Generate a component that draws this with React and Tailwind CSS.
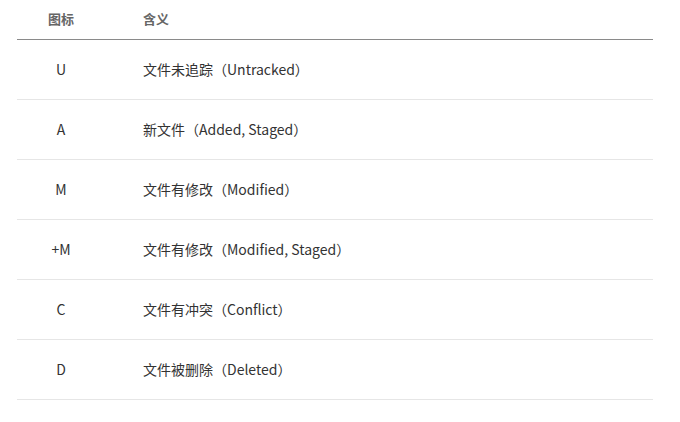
const rows = [
  { icon: "U", desc: "文件未追踪（Untracked）" },
  { icon: "A", desc: "新文件（Added, Staged）" },
  { icon: "M", desc: "文件有修改（Modified）" },
  { icon: "+M", desc: "文件有修改（Modified, Staged）" },
  { icon: "C", desc: "文件有冲突（Conflict）" },
  { icon: "D", desc: "文件被删除（Deleted）" },
];

const App = () => {
  return (
    <div className="bg-white w-[680px] h-[422px] pl-[17px] font-['Noto_Sans_CJK_SC',sans-serif] text-[14px] text-[#333]">
      <table className="w-[636px] border-collapse">
        <thead>
          <tr className="h-[39px] border-b border-[#8a8a8a]">
            <th className="w-[88px] text-center font-bold text-[13px] text-[#666] pb-[2px]">图标</th>
            <th className="text-left font-bold text-[13px] text-[#666] pl-[38px] pb-[2px]">含义</th>
          </tr>
        </thead>
        <tbody>
          {rows.map((row) => (
            <tr key={row.icon} className="h-[60px] border-b border-[#e6e6e6]">
              <td className="text-center">{row.icon}</td>
              <td className="pl-[38px]">{row.desc}</td>
            </tr>
          ))}
        </tbody>
      </table>
    </div>
  );
};

export default App;
